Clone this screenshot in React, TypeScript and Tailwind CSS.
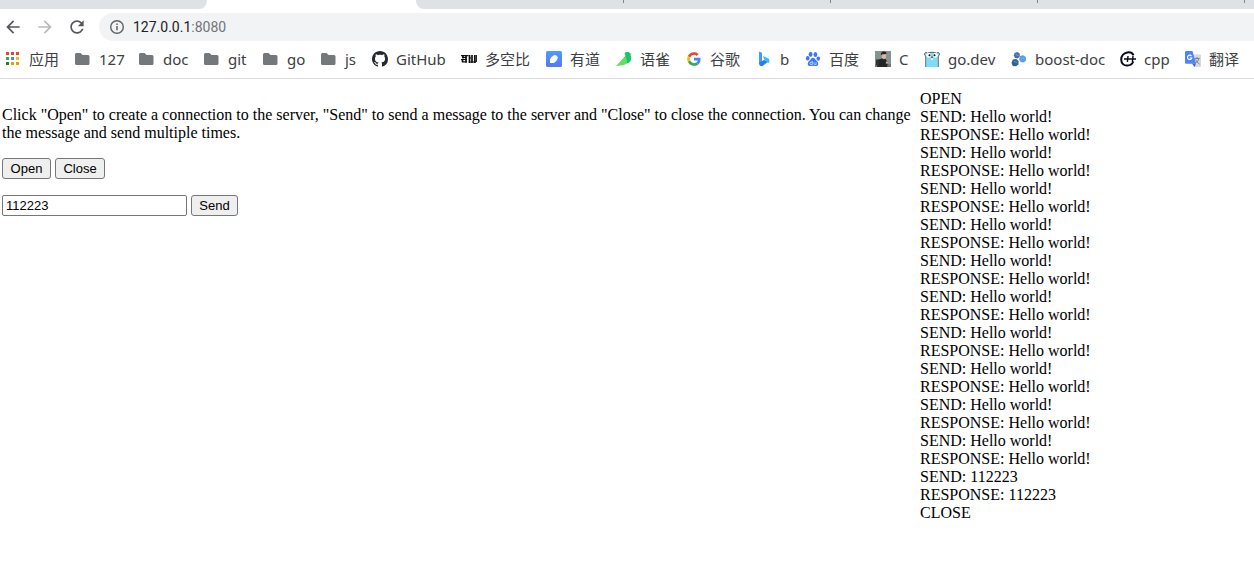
import { useState } from "react";
import type { ReactNode } from "react";

function Icon({ children, box = "0 0 16 16" }: { children: ReactNode; box?: string }) {
  return (
    <svg viewBox={box} className="size-4 shrink-0" aria-hidden="true">
      {children}
    </svg>
  );
}

const appColors = ["#ea4335", "#ea4335", "#ea4335", "#34a853", "#4285f4", "#fbbc05", "#188038", "#f29900", "#f29900"];

const apps = (
  <Icon>
    {appColors.map((c, i) => (
      <rect key={i} x={1 + (i % 3) * 5} y={1 + Math.floor(i / 3) * 5} width="3" height="3" fill={c} />
    ))}
  </Icon>
);

const folder = (
  <Icon>
    <path fill="#74787b" d="M1.500 2h4l2 2H13a1.500 1.500 0 0 1 1.500 1.500v7A1.500 1.500 0 0 1 13 14H1.500A1.500 1.500 0 0 1 0 12.500v-9A1.500 1.500 0 0 1 1.500 2z" />
  </Icon>
);

const github = (
  <Icon>
    <path
      fill="#24292f"
      d="M8 0C3.58 0 0 3.58 0 8c0 3.54 2.29 6.53 5.47 7.59.4.07.55-.17.55-.38 0-.19-.01-.82-.01-1.49-2.01.37-2.53-.49-2.69-.94-.09-.23-.48-.94-.82-1.13-.28-.15-.68-.52-.01-.53.63-.01 1.08.58 1.23.82.72 1.21 1.87.87 2.33.66.07-.52.28-.87.51-1.07-1.78-.2-3.64-.89-3.64-3.95 0-.87.31-1.59.82-2.15-.08-.2-.36-1.02.08-2.12 0 0 .67-.21 2.2.82.64-.18 1.32-.27 2-.27s1.36.09 2 .27c1.53-1.04 2.2-.82 2.2-.82.44 1.1.16 1.92.08 2.12.51.56.82 1.27.82 2.15 0 3.07-1.87 3.75-3.65 3.95.29.25.54.73.54 1.48 0 1.07-.01 1.93-.01 2.2 0 .21.15.46.55.38A8.01 8.01 0 0 0 16 8c0-4.42-3.58-8-8-8z"
    />
  </Icon>
);

const duokong = (
  <Icon>
    <path fill="none" stroke="#111" strokeWidth="1.200" d="M0 4.600h7M1 6.500h5M0 8.500h6M1 10.800h5" />
    <path fill="none" stroke="#111" strokeWidth="1.700" d="M2 4.500v3M5 4v7.500M1.500 8v3M8.500 4v8M11 4v8M13.800 4v8" />
    <path fill="none" stroke="#111" strokeWidth="1.200" d="M7.500 4.600h1M8 11h7M15.300 4v7M8 7h2" />
  </Icon>
);

const youdao = (
  <Icon>
    <defs>
      <linearGradient id="youdao" x1="0" y1="0" x2="0" y2="1">
        <stop stopColor="#4c9cff" />
        <stop offset="1" stopColor="#5777f5" />
      </linearGradient>
    </defs>
    <rect width="16" height="16" rx="1.500" fill="url(#youdao)" />
    <path fill="#fff" d="M4 12V8.200C4.500 6.500 6.500 4.500 8.800 4c1.300.2 2.300 1 3 2.300C11.500 9.500 8.500 12 7.500 12z" />
  </Icon>
);

const yuque = (
  <Icon>
    <path fill="#15c66b" d="M8.500 2c1.500-1.500 4.800-1.300 5.700.4l1.300.4-1.200 1c2.700 4-.6 9-5.100 8.700L5.500 9.500l4-4.500z" />
    <path fill="#64df58" d="M9.300 5.500C11.500 8.500 12 12.500 8.500 13.800 6 15 2.500 14.300 0 15z" />
  </Icon>
);

const google = (
  <Icon box="-4 -4 56 56">
    <path fill="#ea4335" d="M24 9.500c3.540 0 6.710 1.220 9.210 3.600l6.850-6.850C35.900 2.380 30.470 0 24 0 14.620 0 6.510 5.380 2.560 13.220l7.980 6.190C12.430 13.720 17.740 9.500 24 9.500z" />
    <path fill="#4285f4" d="M46.980 24.550c0-1.570-.15-3.090-.38-4.550H24v9.020h12.940c-.58 2.960-2.260 5.480-4.780 7.180l7.730 6c4.510-4.180 7.090-10.360 7.090-17.650z" />
    <path fill="#fbbc05" d="M10.530 28.590A14.500 14.500 0 0 1 9.770 24c0-1.600.27-3.140.76-4.590l-7.980-6.190A23.900 23.900 0 0 0 0 24c0 3.880.92 7.540 2.560 10.780z" />
    <path fill="#34a853" d="M24 48c6.480 0 11.930-2.130 15.890-5.810l-7.730-6c-2.150 1.450-4.920 2.300-8.160 2.300-6.260 0-11.570-4.220-13.470-9.910l-7.980 6.190C6.510 42.620 14.620 48 24 48z" />
  </Icon>
);

const bing = (
  <Icon>
    <path fill="#3aa0f2" d="M3 .5l3 1.200v9L3 13.500z" />
    <path fill="#2f7ce8" d="M3 12l3-2 2-1 4.500 1.500L6.500 15C4.700 15.800 3 14.500 3 12z" />
    <path fill="#39bdf3" d="M7 5l5 2.300c2 1.200 2 3.700.3 5L9.500 9.500 8.200 8.400z" />
  </Icon>
);

const baidu = (
  <Icon>
    <g fill="#3b76f6">
      <ellipse cx="5.600" cy="3.300" rx="1.900" ry="2.500" />
      <ellipse cx="10.400" cy="3.400" rx="1.900" ry="2.500" />
      <ellipse cx="2.700" cy="7.300" rx="1.800" ry="2.200" />
      <ellipse cx="13.300" cy="7.600" rx="1.800" ry="2.200" />
      <path d="M8 6.700c1.800 0 2.300 2 3.800 3.200 2.200 1.900 2 5-1 5.100-1 0-1.800-.3-2.800-.3s-1.800.3-2.800.3c-3-.1-3.200-3.200-1-5.100C5.700 8.700 6.200 6.700 8 6.700z" />
    </g>
    <path fill="none" stroke="#fff" strokeWidth=".6" d="M7.300 9.800v3.700H6a1.100 1.100 0 0 1 0-2.300h1.300M9 11.200v1.500q0 .8.800.8h1.300v-2.300" />
  </Icon>
);

const portrait = (
  <Icon>
    <rect width="16" height="16" fill="#87938f" />
    <rect y="13" width="16" height="3" fill="#77756f" />
    <path fill="#24252a" d="M2 16l1.500-7.500L7 7.500l3.500.5 2.500 3.500-1 4.500z" />
    <path fill="#d9b9a2" d="M6.500 3.200h4.800l-.4 3.500L9 8.300 7 7z" />
    <path fill="#2a2223" d="M6 4.500C5.500 1.800 7 .5 9 .6c2 .1 2.700 1.100 2.400 2.400L7.200 3.200z" />
    <path fill="#d0aa94" d="M11 10.500l2.300.2-.5 2-2-.2z" />
    <path fill="#303137" d="M1 8.500h3v5.500H1z" />
  </Icon>
);

const gopher = (
  <Icon>
    <path fill="#7fdcf8" d="M2.200 16V5C1 4.800.2 3.200.8 2.200c.8-1.200 2.200-.6 2.600 0 2.500-1.200 6.700-1.200 9.200 0 .5-.7 1.900-1.100 2.600 0 .6 1.100-.1 2.600-1.400 2.800v11z" />
    <path fill="none" stroke="#20262b" strokeWidth=".7" d="M1.700 16V5C.6 4.500.2 3.200.8 2.200c.8-1.200 2.200-.6 2.600 0 2.500-1.200 6.700-1.200 9.200 0 .5-.7 1.900-1.100 2.600 0 .6 1.100.2 2.300-.9 2.800v11" />
    <circle cx="4.600" cy="4.300" r="2.400" fill="#fff" />
    <circle cx="11.400" cy="4.300" r="2.400" fill="#fff" />
    <circle cx="5.500" cy="4.300" r="1" fill="#111" />
    <circle cx="10.500" cy="4.300" r="1" fill="#111" />
    <ellipse cx="8" cy="7" rx="1.700" ry="1" fill="#e9c7a4" />
    <ellipse cx="8" cy="6.100" rx="1" ry=".6" fill="#222" />
    <path fill="#fff" d="M7.300 7.600h1.400v1.500H7.300z" />
  </Icon>
);

const boost = (
  <Icon>
    <path fill="#3c6fb5" d="M3.500 2l2.900-1 2.300 1.500.1 3-2.200 1.900-2.800-.7-1-2.200z" />
    <path fill="#5f9ae6" d="M9 5l3.200-.7 2.600 1.700.3 3.400-2.500 2-3-.5-1.500-2.500z" />
    <path fill="#2f5f9d" d="M1.800 8.500l3.500-.5 2.300 2-.2 3.500-2.300 1.800-3.300-.4-1.300-3z" />
    <path fill="none" stroke="#a8cdfa" strokeWidth=".5" d="M4.500 3.500l3 1M10.500 7l3 1M3 10.500l3 1" />
  </Icon>
);

const cpp = (
  <Icon>
    <path fill="none" stroke="#08081c" strokeWidth="2" d="M13.600 4.200C12.500 2.200 10 1 7.300 1.400 3.500 2 1.200 5 1.200 8.500c0 4 2.800 6.300 6.100 6.100 3-.1 5-1.600 6-4.100" />
    <path fill="none" stroke="#08081c" strokeWidth="1.400" d="M4 8h12M8 5l-.6 6M13 5l-.6 6" />
  </Icon>
);

const translate = (
  <Icon>
    <path fill="#d5d8dc" d="M6 3.500h9a1 1 0 0 1 1 1V15a1 1 0 0 1-1 1H9.500z" />
    <path fill="#3367d6" d="M7 12.500h4L9.500 16z" />
    <path fill="#4f86ec" d="M1 0h6.500L11 12.800H1a1 1 0 0 1-1-1V1a1 1 0 0 1 1-1z" />
    <path fill="none" stroke="#fff" strokeWidth="1.100" d="M6.500 5.100A2.200 2.200 0 1 0 6.800 7H4.700" />
    <path fill="none" stroke="#6c7c88" strokeWidth=".9" d="M9.700 7.500h5M12 6v1.500M13.800 7.500c-.3 2-1.500 3.500-3.300 4.500M10.700 8.500c.8 2 2 3.500 3.800 4.500" />
  </Icon>
);

const bookmarks: { label: string; icon: ReactNode; width: string }[] = [
  { label: "应用", icon: apps, width: "w-[30px]" },
  { label: "127", icon: folder, width: "w-6" },
  { label: "doc", icon: folder, width: "w-[25px]" },
  { label: "git", icon: folder, width: "w-[19px]" },
  { label: "go", icon: folder, width: "w-[18px]" },
  { label: "js", icon: folder, width: "w-[11px]" },
  { label: "GitHub", icon: github, width: "w-[49px]" },
  { label: "多空比", icon: duokong, width: "w-[45px]" },
  { label: "有道", icon: youdao, width: "w-[30px]" },
  { label: "语雀", icon: yuque, width: "w-[30px]" },
  { label: "谷歌", icon: google, width: "w-[30px]" },
  { label: "b", icon: bing, width: "w-[9px]" },
  { label: "百度", icon: baidu, width: "w-[30px]" },
  { label: "C", icon: portrait, width: "w-[9px]" },
  { label: "go.dev", icon: gopher, width: "w-[47px]" },
  { label: "boost-doc", icon: boost, width: "w-[69px]" },
  { label: "cpp", icon: cpp, width: "w-[25px]" },
  { label: "翻译", icon: translate, width: "w-[30px]" },
];

const log = [
  "OPEN",
  ...Array.from({ length: 10 }, () => ["SEND: Hello world!", "RESPONSE: Hello world!"]).flat(),
  "SEND: 112223",
  "RESPONSE: 112223",
  "CLOSE",
];

const arrow = "M20 11H7.830l5.590-5.590L12 4l-8 8 8 8 1.410-1.410L7.830 13H20v-2z";
const button =
  "h-[21px] rounded-[3px] border border-[#767676] bg-[#efefef] text-center font-['Liberation_Sans',sans-serif] text-[13px] leading-4";

export default function App() {
  const [message, setMessage] = useState("112223");
  return (
    <div className="min-h-screen bg-white text-black">
      <header className="border-b border-[#d9dadc] font-['Noto_Sans','Noto_Sans_CJK_SC',sans-serif] text-[#3c4043]">
        <div className="flex h-[9px]">
          <div className="w-[207px] shrink-0 rounded-br-lg bg-[#dee1e6]" />
          <div className="w-[209px] shrink-0" />
          <div className="flex flex-1 overflow-hidden rounded-bl-lg bg-[#dee1e6]">
            {[0, 1, 2, 3].map((n) => (
              <div key={n} className="ml-[206px] h-[3px] w-px shrink-0 bg-[#80868b] first:ml-[207px]" />
            ))}
          </div>
        </div>
        <nav className="flex items-center pt-1 pl-[3px]" aria-label="Navigation">
          <button aria-label="Back" className="mr-3 text-[#54575b]">
            <svg viewBox="0 0 24 24" className="size-5" fill="currentColor"><path d={arrow} /></svg>
          </button>
          <button aria-label="Forward" className="mr-3 text-[#b8babc]">
            <svg viewBox="0 0 24 24" className="size-5" fill="currentColor"><path transform="matrix(-1 0 0 1 24 0)" d={arrow} /></svg>
          </button>
          <button aria-label="Reload" className="mr-3 text-[#54575b]">
            <svg viewBox="0 0 24 24" className="size-5" fill="currentColor">
              <path d="M17.650 6.350C16.200 4.900 14.210 4 12 4c-4.420 0-7.990 3.580-7.990 8s3.570 8 7.990 8c3.730 0 6.840-2.550 7.730-6h-2.080c-.82 2.330-3.040 4-5.650 4-3.310 0-6-2.690-6-6s2.690-6 6-6c1.660 0 3.140.69 4.220 1.780L13 11h7V4l-2.350 2.350z" />
            </svg>
          </button>
          <div className="flex h-7 flex-1 items-center gap-2 rounded-l-full bg-[#f1f3f4] pl-[10px] font-[Roboto,sans-serif] text-sm">
            <svg viewBox="0 0 16 16" className="size-4" aria-hidden="true">
              <circle cx="8" cy="8" r="6.300" fill="none" stroke="#5f6368" strokeWidth="1.400" />
              <path d="M7.250 7h1.500v4.200h-1.500zM7.250 4.600h1.500v1.500h-1.500z" fill="#5f6368" />
            </svg>
            <span className="text-[#202124]">127.0.0.1<span className="text-[#70757a]">:8080</span></span>
          </div>
        </nav>
        <nav className="flex h-[37px] items-center gap-4 overflow-hidden pb-px pl-[5px] text-[15px] leading-5 whitespace-nowrap" aria-label="Bookmarks">
          {bookmarks.map((b) => (
            <a key={b.label} href="#" className="flex shrink-0 items-center gap-2">
              {b.icon}
              <span className={b.width}>{b.label}</span>
            </a>
          ))}
        </nav>
      </header>

      <main className="grid grid-cols-[1fr_334px] pt-[11px] font-['Liberation_Serif',serif] text-base leading-[18px]">
        <section className="pt-4 pr-1 pl-[2px]">
          <p>
            Click "Open" to create a connection to the server, "Send" to send a message to the server and "Close" to
            close the connection. You can change the message and send multiple times.
          </p>
          <form onSubmit={(e) => e.preventDefault()} className="pt-4">
            <div className="flex gap-1">
              <button type="button" className={`${button} w-[49px]`}>Open</button>
              <button type="button" className={`${button} w-[50px]`}>Close</button>
            </div>
            <div className="flex gap-1 pt-4">
              <input
                type="text"
                aria-label="Message"
                value={message}
                onChange={(e) => setMessage(e.target.value)}
                className="h-[21px] w-[185px] rounded-xs border border-[#767676] bg-white px-[3px] font-['Liberation_Sans',sans-serif] text-[13px]"
              />
              <button type="submit" className={`${button} w-[47px]`}>Send</button>
            </div>
          </form>
        </section>
        <section aria-label="Output">
          {log.map((line, i) => (
            <div key={i}>{line}</div>
          ))}
        </section>
      </main>
    </div>
  );
}
